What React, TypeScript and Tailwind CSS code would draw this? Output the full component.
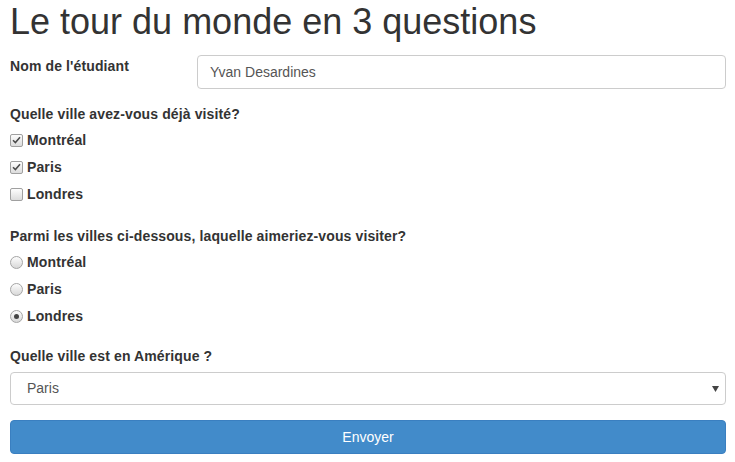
import React, { useState } from "react";

const font = { fontFamily: '"Liberation Sans", Arial, sans-serif' };

function Check({ checked }: { checked: boolean }) {
  return (
    <span className="flex h-[13px] w-[13px] items-center justify-center rounded-[2px] border border-[#a0a0a0] bg-gradient-to-b from-[#fdfdfd] to-[#dcdcdc]">
      {checked && (
        <svg width="9" height="8" viewBox="0 0 9 8">
          <path d="M1 4.2 L3.4 6.6 L8 1.2" fill="none" stroke="#4a4a4a" strokeWidth="1.5" />
        </svg>
      )}
    </span>
  );
}

function Radio({ checked }: { checked: boolean }) {
  return (
    <span className="flex h-[13px] w-[13px] items-center justify-center rounded-full border border-[#a5a5a5] bg-gradient-to-b from-[#fdfdfd] to-[#d8d8d8]">
      {checked && <span className="h-[5px] w-[5px] rounded-full bg-[#444]" />}
    </span>
  );
}

export default function App() {
  const [visited, setVisited] = useState<string[]>(["Montréal", "Paris"]);
  const [wish, setWish] = useState("Londres");
  const villes = ["Montréal", "Paris", "Londres"];

  const toggle = (v: string) =>
    setVisited((prev) => (prev.includes(v) ? prev.filter((x) => x !== v) : [...prev, v]));

  return (
    <div style={font} className="bg-white pl-[10px] pr-[9px] text-[14px] text-[#333]">
      <h1 className="pt-[2px] text-[36px] leading-[40px]">Le tour du monde en 3 questions</h1>

      {/* nom */}
      <div className="mt-[13px] flex">
        <label className="w-[187px] pt-[1px] font-bold leading-[20px] tracking-[0.12px]">Nom de l'étudiant</label>
        <div className="flex h-[34px] flex-1 items-center rounded-[4px] border border-[#ccc] px-[12px] text-[#555]">
          Yvan Desardines
        </div>
      </div>

      {/* checkboxes */}
      <div className="mt-[15px] font-bold leading-[20px] tracking-[0.12px]">Quelle ville avez-vous déjà visité?</div>
      <div className="mt-[6px] flex flex-col gap-[7px]">
        {villes.map((v) => (
          <div key={v} className="flex h-[20px] cursor-pointer items-center gap-[4px] font-bold tracking-[0.12px]" onClick={() => toggle(v)}>
            <Check checked={visited.includes(v)} />
            <span>{v}</span>
          </div>
        ))}
      </div>

      {/* radios */}
      <div className="mt-[22px] font-bold leading-[20px] tracking-[0.12px]">
        Parmi les villes ci-dessous, laquelle aimeriez-vous visiter?
      </div>
      <div className="mt-[6px] flex flex-col gap-[7px]">
        {villes.map((v) => (
          <div key={v} className="flex h-[20px] cursor-pointer items-center gap-[4px] font-bold tracking-[0.12px]" onClick={() => setWish(v)}>
            <Radio checked={wish === v} />
            <span>{v}</span>
          </div>
        ))}
      </div>

      {/* select */}
      <div className="mt-[20px] font-bold leading-[20px] tracking-[0.12px]">Quelle ville est en Amérique ?</div>
      <div className="mt-[6px] flex h-[33px] items-center justify-between rounded-[4px] border border-[#ccc] pl-[16px] pr-[6px] text-[#555]">
        <span>Paris</span>
        <svg width="7" height="6" viewBox="0 0 7 6">
          <path d="M0 0 H7 L3.5 6 Z" fill="#444" />
        </svg>
      </div>

      <button className="mt-[15px] flex h-[34px] w-full items-center justify-center rounded-[4px] border border-[#3a7fc0] bg-[#428bca] text-white">
        Envoyer
      </button>
    </div>
  );
}
